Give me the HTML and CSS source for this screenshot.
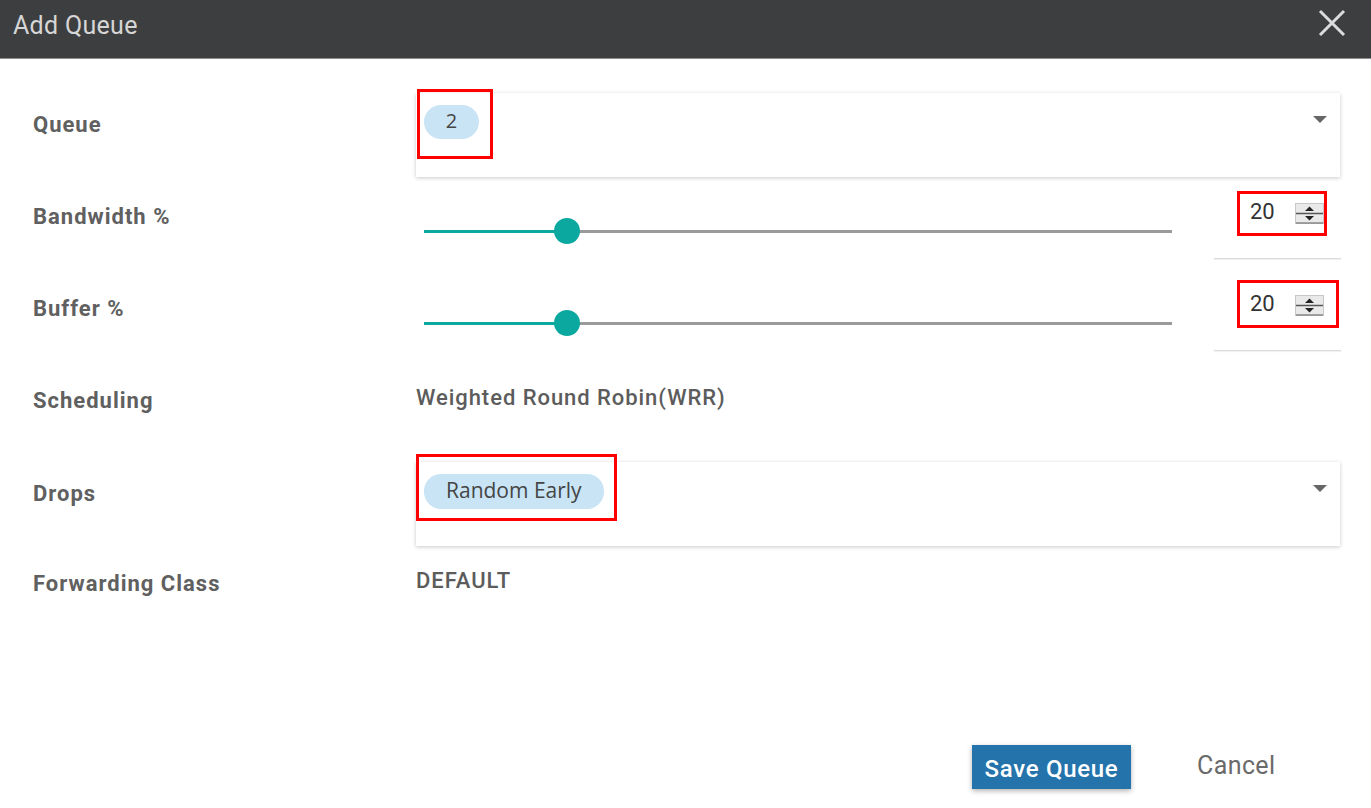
FILE: index.html
```html
<!DOCTYPE html>
<html>
<head>
<meta charset="utf-8">
<title>Add Queue</title>
<link rel="stylesheet" href="styles.css">
</head>
<body>
<div class="dialog">
  <div class="header">
    <span class="title">Add Queue</span>
    <svg class="close" width="28" height="28" viewBox="0 0 28 28"><path d="M2 2 L26 26 M26 2 L2 26" stroke="#dcdcdc" stroke-width="3" fill="none"/></svg>
  </div>
  <div class="form">
    <div class="row row-queue">
      <div class="label">Queue</div>
      <div class="value">
        <div class="select">
          <span class="chip chip-num">2</span>
          <svg class="caret" width="14" height="7" viewBox="0 0 14 7"><path d="M0 0 H14 L7 7 Z" fill="#666"/></svg>
          <div class="mark mark-queue"></div>
        </div>
      </div>
    </div>
    <div class="row row-slider">
      <div class="label">Bandwidth %</div>
      <div class="value slider-value">
        <div class="slider">
          <div class="fill" style="width:19.1%"></div>
          <div class="thumb"></div>
          <div class="rest"></div>
        </div>
        <div class="numfield">
          <span class="num">20</span>
          <svg class="spin" width="29" height="21" viewBox="0 0 29 21"><rect x="0.5" y="0.5" width="28" height="20" fill="#e9e9e9" stroke="#c8c8c8"/><path d="M10 8 L14.5 3.5 L19 8 Z" fill="#222"/><path d="M10 13 L14.5 17.5 L19 13 Z" fill="#222"/><line x1="1" y1="10.5" x2="28" y2="10.5" stroke="#555" stroke-width="1.5"/><line x1="1" y1="20" x2="28" y2="20" stroke="#888" stroke-width="1.5"/></svg>
          <div class="mark mark-bw"></div>
        </div>
      </div>
    </div>
    <div class="row row-slider row-buffer">
      <div class="label">Buffer %</div>
      <div class="value slider-value">
        <div class="slider">
          <div class="fill" style="width:19.1%"></div>
          <div class="thumb"></div>
          <div class="rest"></div>
        </div>
        <div class="numfield">
          <span class="num">20</span>
          <svg class="spin" width="29" height="21" viewBox="0 0 29 21"><rect x="0.5" y="0.5" width="28" height="20" fill="#e9e9e9" stroke="#c8c8c8"/><path d="M10 8 L14.5 3.5 L19 8 Z" fill="#222"/><path d="M10 13 L14.5 17.5 L19 13 Z" fill="#222"/><line x1="1" y1="10.5" x2="28" y2="10.5" stroke="#555" stroke-width="1.5"/><line x1="1" y1="20" x2="28" y2="20" stroke="#888" stroke-width="1.5"/></svg>
          <div class="mark mark-buf"></div>
        </div>
      </div>
    </div>
    <div class="row row-text row-sched">
      <div class="label">Scheduling</div>
      <div class="value text">Weighted Round Robin(WRR)</div>
    </div>
    <div class="row row-drops">
      <div class="label">Drops</div>
      <div class="value">
        <div class="select">
          <span class="chip chip-text">Random Early</span>
          <svg class="caret" width="14" height="7" viewBox="0 0 14 7"><path d="M0 0 H14 L7 7 Z" fill="#666"/></svg>
          <div class="mark mark-drops"></div>
        </div>
      </div>
    </div>
    <div class="row row-text row-fwd">
      <div class="label">Forwarding Class</div>
      <div class="value text">DEFAULT</div>
    </div>
  </div>
  <div class="footer">
    <button class="save">Save Queue</button>
    <button class="cancel">Cancel</button>
  </div>
</div>
</body>
</html>
```
FILE: styles.css
```css
* { box-sizing: border-box; }
html, body { margin: 0; padding: 0; background: #fff; }
body { font-family: Roboto, "Liberation Sans", sans-serif; width: 1371px; height: 808px; overflow: hidden; }

.dialog { display: flex; flex-direction: column; height: 808px; }

.header {
  height: 59px;
  background: #3d3e40;
  border-bottom: 1px solid #8c8c8c;
  display: flex;
  align-items: center;
  justify-content: space-between;
  padding: 0 25px 0 13px;
}
.title { font-size: 25px; color: #d6d6d6; font-weight: 400; letter-spacing: 0.3px; margin-top: -7px; }
.close { margin-top: -12px; }

.form { padding: 34px 31px 0 33px; display: flex; flex-direction: column; }

.row { display: flex; align-items: flex-start; }
.label {
  width: 383px;
  flex: none;
  font-size: 22px;
  font-weight: 700;
  letter-spacing: 1px;
  color: #606060;
  line-height: 24px;
}
.value { flex: 1; position: relative; }

.row-queue .label { padding-top: 20px; }
.row-drops { margin-top: 49px; }
.row-drops .label { padding-top: 20px; }

.select {
  position: relative;
  height: 84px;
  background: #fff;
  box-shadow: 0 1px 4px rgba(0,0,0,0.22);
  padding: 12px 8px;
}
.chip {
  display: inline-block;
  height: 34px;
  line-height: 32px;
  border-radius: 17px;
  background: #c8e4f5;
  color: #454545;
  font-size: 20px;
  font-family: "Open Sans", Roboto, sans-serif;
}
.chip-num { width: 55px; text-align: center; }
.chip-text { padding: 0 22px; height: 35px; line-height: 32px; font-size: 21px; }
.caret { position: absolute; right: 13px; top: 23px; }

.mark { position: absolute; border: 3px solid #ff0000; }
.mark-queue { left: 1px; top: -4px; width: 76px; height: 70px; }
.mark-drops { left: 0; top: -8px; width: 201px; height: 67px; }
.mark-bw { left: 23px; top: 2px; width: 90px; height: 45px; }
.mark-buf { left: 23px; top: -1px; width: 102px; height: 48px; }

.row-slider { margin-top: 12px; height: 70px; }
.row-buffer { margin-top: 22px; }
.row-slider .label { padding-top: 16px; }
.slider-value { display: flex; align-items: flex-start; gap: 42px; }
.slider {
  flex: 1;
  margin-left: 8px;
  margin-top: 29px;
  height: 26px;
  display: flex;
  align-items: center;
}
.fill { height: 3px; background: #0aa89e; flex: none; }
.thumb { width: 26px; height: 26px; border-radius: 50%; background: #0aa89e; flex: none; margin: 0 -13px; position: relative; }
.rest { flex: 1; height: 3px; background: #9a9a9a; }

.numfield {
  position: relative;
  width: 127px;
  height: 70px;
  border-bottom: 1px solid #dcdcdc;
  box-shadow: 0 1px 1px rgba(0,0,0,0.06);
  display: flex;
  align-items: flex-start;
  padding: 11px 0 0 36px;
  margin-right: -1px;
}
.num { font-size: 22px; color: #333; line-height: 24px; width: 45px; font-family: Roboto, sans-serif; }
.spin { margin-top: 3px; }

.row-text .label { padding-top: 2px; }
.row-sched { margin-top: 36px; }
.row-fwd { margin-top: 24px; }
.text {
  font-size: 22px;
  font-weight: 500;
  letter-spacing: 0.95px;
  color: #5c5c5c;
  line-height: 24px;
  margin-top: -1px;
}

.footer {
  margin-top: auto;
  display: flex;
  align-items: center;
  padding: 0 0 19px 972px;
}
.save {
  width: 159px;
  height: 44px;
  background: #2473ab;
  color: #fff;
  border: none;
  font-family: Roboto, sans-serif;
  font-size: 24px;
  font-weight: 500;
  letter-spacing: 0.7px;
  box-shadow: 0 2px 5px rgba(0,0,0,0.3);
  padding: 0;
  padding-top: 4px;
}
.cancel {
  margin-left: 66px;
  background: none;
  border: none;
  padding: 0;
  font-family: Roboto, sans-serif;
  font-size: 25px;
  letter-spacing: 0.4px;
  color: #6a6a6a;
  margin-top: -3px;
}
```
